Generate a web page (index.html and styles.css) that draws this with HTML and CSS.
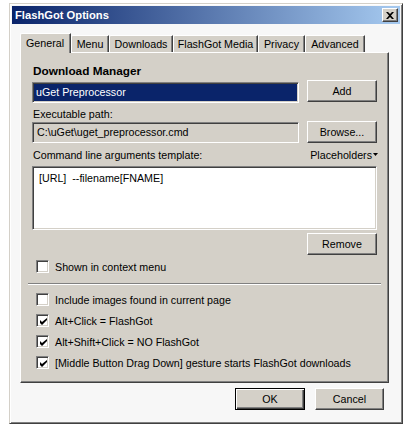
FILE: index.html
```html
<!DOCTYPE html>
<html>
<head>
<meta charset="utf-8">
<link rel="stylesheet" href="styles.css">
</head>
<body>
<div class="window">
  <div class="titlebar">
    <span class="title">FlashGot Options</span>
    <span class="close-btn"><svg width="8" height="7" viewBox="0 0 8 7"><path d="M0 0h2l2 2 2-2h2L5 3.5 8 7H6L4 5 2 7H0l3-3.5z" fill="#000"/></svg></span>
  </div>
  <div class="dialog-body">
    <div class="tabs">
      <div class="tab selected tab-general">General</div>
      <div class="tab tab-menu">Menu</div>
      <div class="tab tab-downloads">Downloads</div>
      <div class="tab tab-media">FlashGot Media</div>
      <div class="tab tab-privacy">Privacy</div>
      <div class="tab tab-advanced">Advanced</div>
    </div>
    <div class="panel">
      <div class="heading">Download Manager</div>
      <div class="row row-first">
        <div class="field field-selected">uGet Preprocessor</div>
        <div class="btn">Add</div>
      </div>
      <div class="label label-path">Executable path:</div>
      <div class="row">
        <div class="field field-readonly">C:\uGet\uget_preprocessor.cmd</div>
        <div class="btn">Browse...</div>
      </div>
      <div class="label label-cmd">
        <span>Command line arguments template:</span>
        <span class="placeholders">Placeholders<svg width="5" height="3" viewBox="0 0 5 3"><path d="M0 0h5L2.5 3z" fill="#000"/></svg></span>
      </div>
      <div class="textarea">[URL]  --filename[FNAME]</div>
      <div class="row-right">
        <div class="btn">Remove</div>
      </div>
      <div class="check-row check-context">
        <span class="checkbox"></span><span>Shown in context menu</span>
      </div>
      <div class="separator"></div>
      <div class="check-list">
        <div class="check-row">
          <span class="checkbox"></span><span>Include images found in current page</span>
        </div>
        <div class="check-row">
          <span class="checkbox checked"><svg width="7" height="7" viewBox="0 0 7 7"><path d="M0 2v3l2 2 5-5V-0L2 4z" fill="#000"/></svg></span><span>Alt+Click = FlashGot</span>
        </div>
        <div class="check-row">
          <span class="checkbox checked"><svg width="7" height="7" viewBox="0 0 7 7"><path d="M0 2v3l2 2 5-5V-0L2 4z" fill="#000"/></svg></span><span>Alt+Shift+Click = NO FlashGot</span>
        </div>
        <div class="check-row">
          <span class="checkbox checked"><svg width="7" height="7" viewBox="0 0 7 7"><path d="M0 2v3l2 2 5-5V-0L2 4z" fill="#000"/></svg></span><span>[Middle Button Drag Down] gesture starts FlashGot downloads</span>
        </div>
      </div>
    </div>
    <div class="dialog-buttons">
      <div class="btn btn-default">OK</div>
      <div class="btn btn-cancel">Cancel</div>
    </div>
  </div>
</div>
</body>
</html>
```
FILE: styles.css
```css
html, body {
  margin: 0;
  padding: 0;
  background: #ffffff;
}
body {
  font-family: "Liberation Sans", Arial, sans-serif;
  font-size: 10.7px;
  color: #000;
}
.window {
  margin: 3px 0 0 9px;
  width: 394px;
  height: 421px;
  box-sizing: border-box;
  background: #f7f7f7;
  border: 1px solid;
  border-color: #d4d0c8 #404040 #404040 #d4d0c8;
  box-shadow: inset 1px 1px 0 #ffffff, inset -1px -1px 0 #808080;
  padding: 2px;
}
.titlebar {
  height: 18px;
  display: flex;
  align-items: center;
  justify-content: space-between;
  background: linear-gradient(to right, #0a246a, #a6caf0);
  color: #fff;
  padding: 0 2px 0 3px;
}
.title {
  font-weight: bold;
  font-size: 11.2px;
}
.close-btn {
  width: 16px;
  height: 14px;
  box-sizing: border-box;
  background: #d4d0c8;
  border: 1px solid;
  border-color: #ffffff #404040 #404040 #ffffff;
  box-shadow: inset -1px -1px 0 #808080;
  display: flex;
  align-items: center;
  justify-content: center;
  padding-right: 1px;
}
.dialog-body {
  padding: 9px 0 0 8px;
}
.tabs {
  display: flex;
  align-items: flex-end;
  height: 19px;
}
.tab {
  height: 17px;
  box-sizing: border-box;
  background: #d4d0c8;
  border-top: 1px solid #ffffff;
  border-left: 1px solid #ffffff;
  border-right: 1px solid #404040;
  box-shadow: inset -1px 0 0 #808080;
  border-top-left-radius: 2px;
  padding: 1px 0 0 0;
  line-height: 15px;
  white-space: nowrap;
  text-align: center;
}
.tab.selected {
  height: 20px;
  margin-bottom: -1px;
  position: relative;
  z-index: 1;
  padding: 2px 1px 0 0;
}
.tab-general { width: 51px; }
.tab-menu { width: 38px; }
.tab-downloads { width: 64px; }
.tab-media { width: 85px; }
.tab-privacy { width: 47px; }
.tab-advanced { width: 60px; }
.panel {
  width: 369px;
  height: 331px;
  box-sizing: border-box;
  background: #d4d0c8;
  border: 1px solid;
  border-color: #ffffff #404040 #404040 #ffffff;
  box-shadow: inset -1px -1px 0 #808080;
  padding: 0 11px 0 11px;
  display: flex;
  flex-direction: column;
}
.heading {
  font-weight: bold;
  font-size: 11.8px;
  line-height: 14px;
  margin-top: 11px;
  padding-left: 1px;
}
.row {
  display: flex;
  align-items: center;
  justify-content: space-between;
  height: 22px;
}
.row-first {
  margin-top: 2px;
}
.field {
  width: 267px;
  height: 21px;
  box-sizing: border-box;
  border: 1px solid;
  border-color: #808080 #ffffff #ffffff #808080;
  box-shadow: inset 1px 1px 0 #404040, inset -1px -1px 0 #d4d0c8;
  line-height: 19px;
  padding-left: 4px;
  white-space: nowrap;
}
.field-selected {
  background: #0a246a;
  color: #ffffff;
  margin-top: 2px;
  padding-left: 3px;
}
.field-readonly {
  background: #d4d0c8;
}
.btn {
  width: 70px;
  height: 22px;
  box-sizing: border-box;
  background: #d4d0c8;
  border: 1px solid;
  border-color: #ffffff #404040 #404040 #ffffff;
  box-shadow: inset -1px -1px 0 #808080;
  display: flex;
  align-items: center;
  justify-content: center;
}
.label {
  line-height: 14px;
  padding-left: 1px;
}
.label-path {
  margin-top: 5px;
}
.label-cmd {
  margin-top: 5px;
  display: flex;
  justify-content: space-between;
  align-items: center;
}
.placeholders {
  display: flex;
  align-items: center;
  gap: 1px;
  margin-right: -1px;
}
.placeholders svg {
  margin-top: -1px;
}
.textarea {
  margin-top: 4px;
  height: 64px;
  box-sizing: border-box;
  background: #ffffff;
  border: 1px solid;
  border-color: #808080 #ffffff #ffffff #808080;
  box-shadow: inset 1px 1px 0 #404040, inset -1px -1px 0 #d4d0c8;
  padding: 5px 0 0 6px;
  white-space: pre;
  line-height: 13px;
}
.row-right {
  display: flex;
  justify-content: flex-end;
  margin-top: 3px;
}
.check-row {
  display: flex;
  align-items: center;
  height: 21px;
  gap: 6px;
  padding-left: 4px;
  white-space: nowrap;
}
.check-context {
  margin-top: 1px;
}
.checkbox {
  width: 13px;
  height: 13px;
  box-sizing: border-box;
  background: #ffffff;
  border: 1px solid;
  border-color: #808080 #ffffff #ffffff #808080;
  box-shadow: inset 1px 1px 0 #404040, inset -1px -1px 0 #d4d0c8;
  display: flex;
  align-items: center;
  justify-content: center;
  flex: none;
}
.checkbox svg {
  margin-left: 1px;
  margin-top: 1px;
}
.separator {
  margin: 6px -4px 0 -4px;
  border-top: 1px solid #808080;
  border-bottom: 1px solid #ffffff;
  height: 0;
}
.check-list {
  margin-top: 4px;
  display: flex;
  flex-direction: column;
}
.dialog-buttons {
  display: flex;
  justify-content: flex-end;
  gap: 10px;
  width: 369px;
  margin-top: 5px;
  padding-right: 5px;
  box-sizing: border-box;
}
.btn-default {
  border: 1px solid #000000;
  box-shadow: inset 1px 1px 0 #ffffff, inset -1px -1px 0 #404040, inset -2px -2px 0 #808080;
}
.btn-cancel {
  width: 69px;
}
```
